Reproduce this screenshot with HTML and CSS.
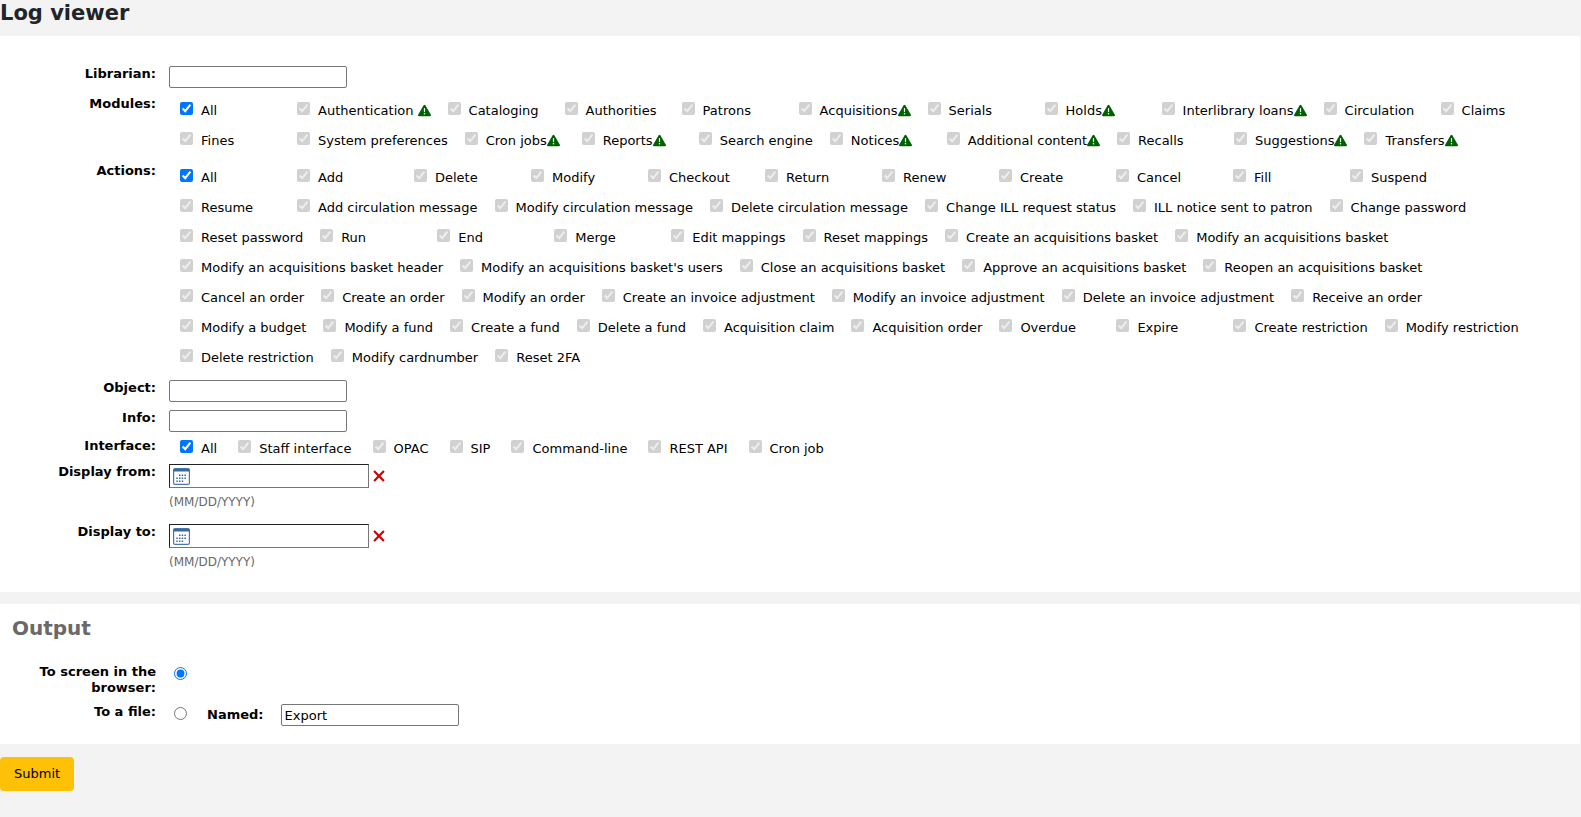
FILE: index.html
```html
<!DOCTYPE html>
<html lang="en">
<head>
<meta charset="utf-8">
<title>Log viewer</title>
<link rel="stylesheet" href="styles.css">
</head>
<body>
<svg class="sprite" aria-hidden="true">
  <symbol id="warn" viewBox="0 0 512 512"><path d="M256 32c14.200 0 27.300 7.500 34.500 19.800l216 368c7.300 12.400 7.300 27.700 .2 40.100S486.300 480 472 480H40c-14.300 0-27.600-7.700-34.700-20.100s-7-27.800 .2-40.100l216-368C228.700 39.500 241.800 32 256 32zm0 128c-13.300 0-24 10.700-24 24V296c0 13.300 10.700 24 24 24s24-10.700 24-24V184c0-13.300-10.700-24-24-24zm32 224a32 32 0 1 0 -64 0 32 32 0 1 0 64 0z"/></symbol>
  <symbol id="calendar" viewBox="0 0 17 17">
    <rect x=".6" y=".6" width="15.800" height="15.800" rx="1.500" fill="#fff" stroke="#4678ac" stroke-width="1.200"/>
    <path d="M.6 1h15.800v2.500H.6z" fill="#38699b"/>
    <path d="M6 7.200h8M3.300 10.200h10.700M3.300 13.200h8" fill="none" stroke="#38699b" stroke-width="1.400" stroke-dasharray="1.500 1.200"/>
  </symbol>
  <symbol id="cross" viewBox="0 0 11 11"><path d="M1 1l9 9M10 1l-9 9" fill="none" stroke="#c00" stroke-width="2"/></symbol>
</svg>
<h1 class="title">Log viewer</h1>
<form>
  <fieldset class="panel filters">
    <div class="row"><label class="name" for="user">Librarian:</label><input class="text" type="text" id="user"></div>
    <div class="row choices"><span class="name">Modules:</span><div class="options" id="modules"></div></div>
    <div class="row choices"><span class="name">Actions:</span><div class="options" id="actions"></div></div>
    <div class="row"><label class="name" for="object">Object:</label><input class="text" type="text" id="object"></div>
    <div class="row tight"><label class="name" for="info">Info:</label><input class="text" type="text" id="info"></div>
    <div class="row choices"><span class="name">Interface:</span><div class="options compact" id="interfaces"></div></div>
    <div class="row date"><label class="name" for="from">Display from:</label>
      <div><div class="picker"><span class="datebox"><svg class="calendar"><use href="#calendar"/></svg><input type="text" id="from"></span><button class="clear" type="button" aria-label="Clear date"><svg><use href="#cross"/></svg></button></div><div class="hint">(MM/DD/YYYY)</div></div></div>
    <div class="row date"><label class="name" for="to">Display to:</label>
      <div><div class="picker"><span class="datebox"><svg class="calendar"><use href="#calendar"/></svg><input type="text" id="to"></span><button class="clear" type="button" aria-label="Clear date"><svg><use href="#cross"/></svg></button></div><div class="hint">(MM/DD/YYYY)</div></div></div>
  </fieldset>
  <section class="panel output">
    <h2 class="subtitle">Output</h2>
    <div class="row"><label class="name" for="screen">To screen in the browser:</label><div class="target"><input type="radio" name="output" id="screen" checked></div></div>
    <div class="row"><label class="name" for="file">To a file:</label><div class="target"><input type="radio" name="output" id="file"><label class="named" for="basename">Named:</label><input class="text" type="text" id="basename" value="Export"></div></div>
  </section>
  <button class="submit" type="submit">Submit</button>
</form>
<script src="script.js"></script>
</body>
</html>
```
FILE: styles.css
```css
* { box-sizing: border-box; }
body {
  margin: 0;
  background: #f3f3f3;
  color: #000;
  font: 13px/16px "DejaVu Sans", sans-serif;
}
input, button { font: inherit; color: inherit; margin: 0; }
.sprite { display: none; }
.title { margin: 0; font-size: 21px; line-height: 26px; color: #212529; padding-bottom: 10px; }
.panel { margin: 0 1px 12px 0; border: 0; padding: 0 12px; background: #fff; min-width: 0; }
.filters { padding-top: 30px; padding-bottom: 8px; }
.row {
  display: grid;
  grid-template-columns: 144px minmax(0, 1fr);
  column-gap: 13px;
  align-items: start;
  padding-bottom: 8px;
}
.name { font-weight: bold; text-align: right; }
.text {
  width: 178px;
  height: 22px;
  padding: 0 3px;
  border: 1px solid #767676;
  border-radius: 2px;
  background: #fff;
}
.options { display: flex; flex-wrap: wrap; padding-left: 11px; }
.option {
  display: flex;
  align-items: baseline;
  gap: 8px;
  min-width: 117px;
  padding: 6px 17px 7px 0;
  white-space: nowrap;
}
.option input { width: 13px; height: 13px; flex: none; }
.choices { padding-bottom: 7px; }
.tight { padding-bottom: 6px; }
.compact .option { min-width: 0; padding: 2px 21px 0 0; }
.warn { width: 13px; height: 13px; fill: #006100; vertical-align: -2px; }
.date { padding-bottom: 14px; }
.picker { display: flex; align-items: center; gap: 4px; }
.datebox {
  display: flex;
  align-items: center;
  width: 200px;
  height: 24px;
  padding-left: 3px;
  border: 1px solid #767676;
  border-top-color: #222;
  border-left-color: #222;
}
.datebox input { flex: 1; min-width: 0; border: 0; padding: 0 4px; outline: 0; background: none; }
.calendar { width: 17px; height: 17px; flex: none; }
.clear { display: flex; padding: 0; border: 0; background: none; }
.clear svg { width: 12px; height: 12px; }
.hint { margin-top: 6px; font-size: 12px; color: #696969; }
.output { margin-bottom: 13px; padding-top: 14px; padding-bottom: 10px; }
.subtitle { margin: 0 0 26px; font-size: 20px; line-height: 20px; color: #696969; }
.target { display: flex; align-items: center; padding-left: 5px; }
.target input[type="radio"] { width: 13px; height: 13px; margin: 3px 0 6px; }
.named { font-weight: bold; margin: 0 17px 0 20px; }
.submit {
  display: block;
  height: 34px;
  padding: 0 14px;
  border: 0;
  border-radius: 4px;
  background: #ffc107;
}
```
FILE: script.js
```js
// A trailing "!" marks a log that is currently turned off; "~" adds a space before its icon.
const groups = {
  modules: ["All", "Authentication~!", "Cataloging", "Authorities", "Patrons", "Acquisitions!", "Serials", "Holds!",
    "Interlibrary loans!", "Circulation", "Claims", "Fines", "System preferences", "Cron jobs!", "Reports!",
    "Search engine", "Notices!", "Additional content!", "Recalls", "Suggestions!", "Transfers!"],
  actions: ["All", "Add", "Delete", "Modify", "Checkout", "Return", "Renew", "Create", "Cancel", "Fill", "Suspend",
    "Resume", "Add circulation message", "Modify circulation message", "Delete circulation message",
    "Change ILL request status", "ILL notice sent to patron", "Change password", "Reset password", "Run", "End",
    "Merge", "Edit mappings", "Reset mappings", "Create an acquisitions basket", "Modify an acquisitions basket",
    "Modify an acquisitions basket header", "Modify an acquisitions basket's users", "Close an acquisitions basket",
    "Approve an acquisitions basket", "Reopen an acquisitions basket", "Cancel an order", "Create an order",
    "Modify an order", "Create an invoice adjustment", "Modify an invoice adjustment",
    "Delete an invoice adjustment", "Receive an order", "Modify a budget", "Modify a fund", "Create a fund",
    "Delete a fund", "Acquisition claim", "Acquisition order", "Overdue", "Expire", "Create restriction",
    "Modify restriction", "Delete restriction", "Modify cardnumber", "Reset 2FA"],
  interfaces: ["All", "Staff interface", "OPAC", "SIP", "Command-line", "REST API", "Cron job"]
};
const icon = '<svg class="warn" role="img" aria-label="Log disabled"><use href="#warn"/></svg>';
for (const [id, names] of Object.entries(groups)) {
  document.getElementById(id).innerHTML = names.map((name, i) =>
    `<label class="option"><input type="checkbox" name="${id}" checked${i ? " disabled" : ""}>` +
    `<span>${name.replace("~", " ").replace("!", icon)}</span></label>`).join("");
}
```
